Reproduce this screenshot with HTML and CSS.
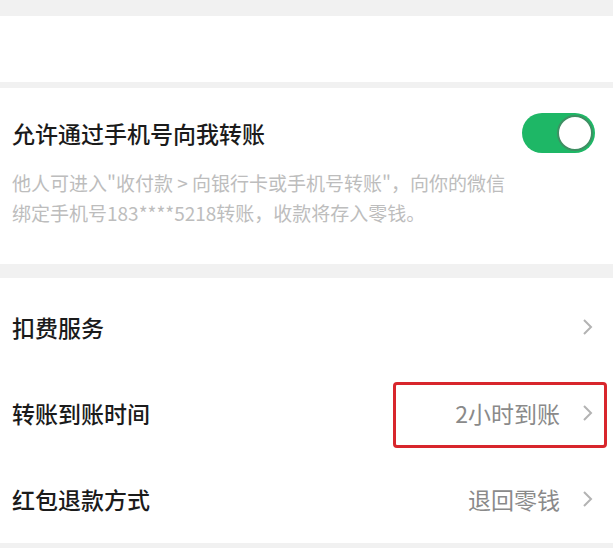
FILE: index.html
```html
<!DOCTYPE html>
<html lang="zh">
<head>
<meta charset="utf-8">
<link rel="stylesheet" href="styles.css">
</head>
<body>
<div class="page">
  <div class="band band-top"></div>
  <div class="card card-blank"></div>
  <div class="card card-toggle">
    <div class="toggle-row">
      <div class="title">允许通过手机号向我转账</div>
      <div class="switch"><div class="knob"></div></div>
    </div>
    <div class="desc">他人可进入"收付款 &gt; 向银行卡或手机号转账"，向你的微信<br>绑定手机号183****5218转账，收款将存入零钱。</div>
  </div>
  <div class="card card-list">
    <div class="row">
      <div class="label">扣费服务</div>
      <div class="right">
        <svg class="chev" width="12" height="18" viewBox="0 0 12 18"><path d="M2 2 L9 9 L2 16" fill="none" stroke="#b3b3b3" stroke-width="2"/></svg>
      </div>
    </div>
    <div class="row row-hl">
      <div class="label">转账到账时间</div>
      <div class="right">
        <span class="value">2小时到账</span>
        <svg class="chev" width="12" height="18" viewBox="0 0 12 18"><path d="M2 2 L9 9 L2 16" fill="none" stroke="#b3b3b3" stroke-width="2"/></svg>
      </div>
      <div class="highlight"></div>
    </div>
    <div class="row">
      <div class="label">红包退款方式</div>
      <div class="right">
        <span class="value">退回零钱</span>
        <svg class="chev" width="12" height="18" viewBox="0 0 12 18"><path d="M2 2 L9 9 L2 16" fill="none" stroke="#b3b3b3" stroke-width="2"/></svg>
      </div>
    </div>
  </div>
</div>
</body>
</html>
```

FILE: styles.css
```css
html, body {
  margin: 0;
  padding: 0;
  background: #f1f1f1;
}
body {
  font-family: "Noto Sans CJK SC", "Noto Sans", sans-serif;
  width: 613px;
  height: 548px;
  overflow: hidden;
}
.page {
  display: flex;
  flex-direction: column;
}
.band-top {
  height: 16px;
}
.card {
  background: #fff;
}
.card-blank {
  height: 66px;
  margin-bottom: 6px;
}
.card-toggle {
  padding: 25px 18px 36px 12px;
  margin-bottom: 14px;
}
.toggle-row {
  display: flex;
  align-items: center;
  justify-content: space-between;
  height: 40px;
}
.title {
  font-size: 23px;
  font-weight: 500;
  color: #1b1b1b;
  line-height: 40px;
}
.switch {
  width: 73px;
  height: 40px;
  border-radius: 20px;
  background: #1eb766;
  display: flex;
  align-items: center;
  justify-content: flex-end;
  box-sizing: border-box;
  padding-right: 2px;
}
.knob {
  width: 36px;
  height: 36px;
  border-radius: 50%;
  background: #fff;
  box-sizing: border-box;
  border: 2px solid #3f8f63;
}
.desc {
  margin-top: 15px;
  font-size: 19px;
  line-height: 30px;
  color: #bdbdbd;
  white-space: nowrap;
}
.card-list {
  padding: 6px 0 1px 0;
}
.row {
  height: 86px;
  display: flex;
  align-items: center;
  justify-content: space-between;
  padding: 0 19px 0 12px;
  position: relative;
}
.label {
  font-size: 23px;
  font-weight: 500;
  color: #1b1b1b;
}
.right {
  display: flex;
  align-items: center;
  gap: 22px;
}
.value {
  font-size: 23px;
  color: #8a8a8a;
}
.chev {
  display: block;
}
.highlight {
  position: absolute;
  top: 12px;
  right: 6px;
  width: 214px;
  height: 66px;
  box-sizing: border-box;
  border: 3px solid #d8262c;
  border-radius: 4px;
}
```
